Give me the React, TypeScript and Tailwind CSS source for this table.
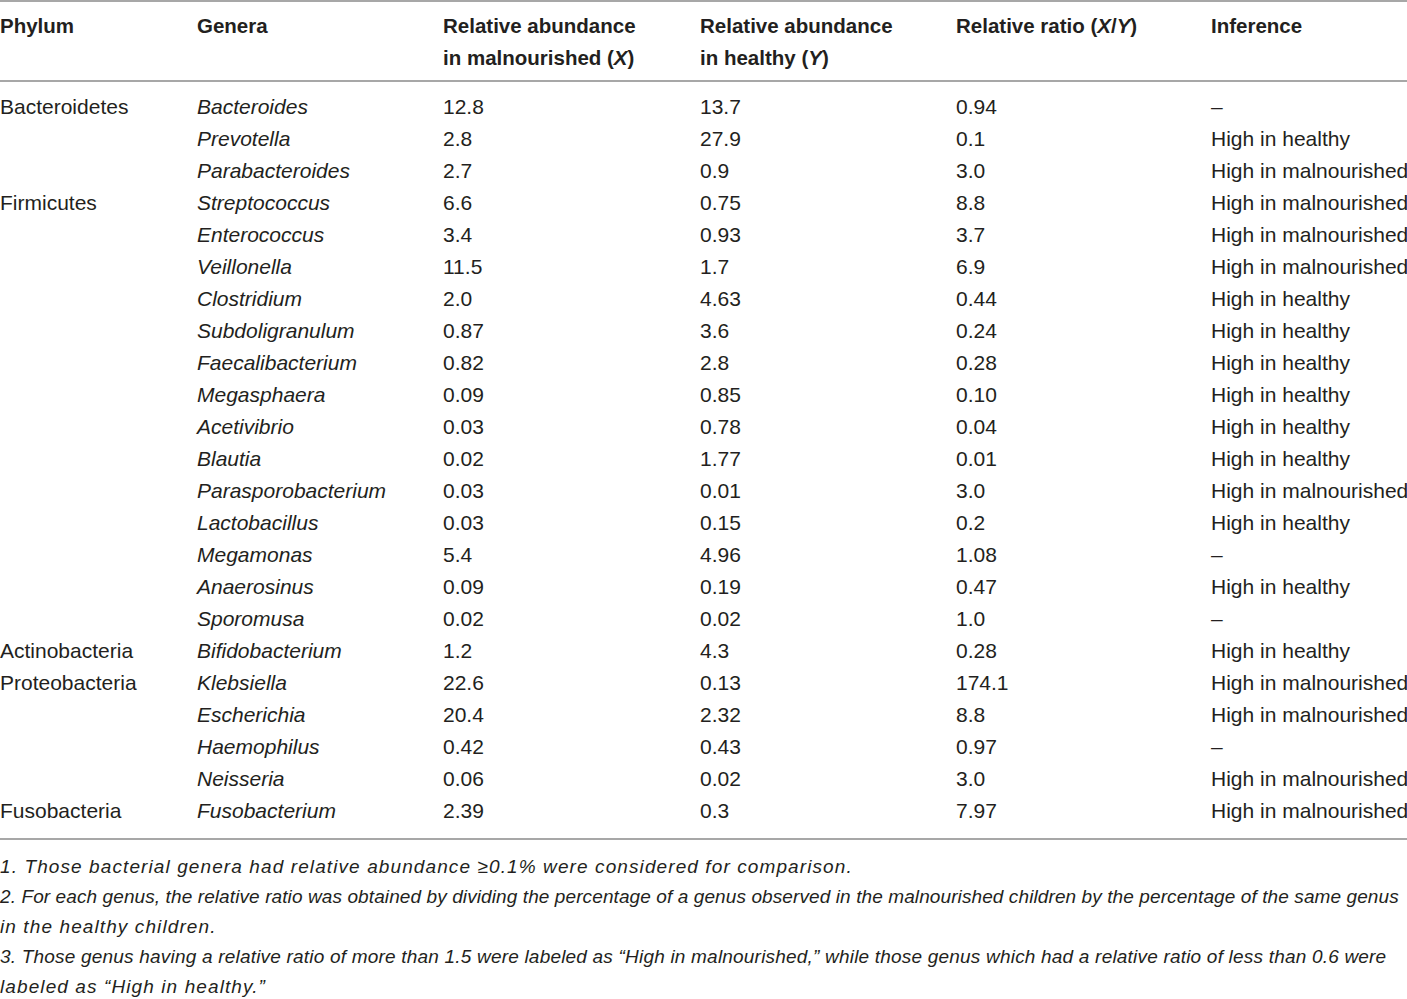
import React from 'react';

type Row = { phylum?: string; genus: string; x: string; y: string; ratio: string; inference: string };

const rows: Row[] = [
  { phylum: 'Bacteroidetes', genus: 'Bacteroides', x: '12.8', y: '13.7', ratio: '0.94', inference: '–' },
  { genus: 'Prevotella', x: '2.8', y: '27.9', ratio: '0.1', inference: 'High in healthy' },
  { genus: 'Parabacteroides', x: '2.7', y: '0.9', ratio: '3.0', inference: 'High in malnourished' },
  { phylum: 'Firmicutes', genus: 'Streptococcus', x: '6.6', y: '0.75', ratio: '8.8', inference: 'High in malnourished' },
  { genus: 'Enterococcus', x: '3.4', y: '0.93', ratio: '3.7', inference: 'High in malnourished' },
  { genus: 'Veillonella', x: '11.5', y: '1.7', ratio: '6.9', inference: 'High in malnourished' },
  { genus: 'Clostridium', x: '2.0', y: '4.63', ratio: '0.44', inference: 'High in healthy' },
  { genus: 'Subdoligranulum', x: '0.87', y: '3.6', ratio: '0.24', inference: 'High in healthy' },
  { genus: 'Faecalibacterium', x: '0.82', y: '2.8', ratio: '0.28', inference: 'High in healthy' },
  { genus: 'Megasphaera', x: '0.09', y: '0.85', ratio: '0.10', inference: 'High in healthy' },
  { genus: 'Acetivibrio', x: '0.03', y: '0.78', ratio: '0.04', inference: 'High in healthy' },
  { genus: 'Blautia', x: '0.02', y: '1.77', ratio: '0.01', inference: 'High in healthy' },
  { genus: 'Parasporobacterium', x: '0.03', y: '0.01', ratio: '3.0', inference: 'High in malnourished' },
  { genus: 'Lactobacillus', x: '0.03', y: '0.15', ratio: '0.2', inference: 'High in healthy' },
  { genus: 'Megamonas', x: '5.4', y: '4.96', ratio: '1.08', inference: '–' },
  { genus: 'Anaerosinus', x: '0.09', y: '0.19', ratio: '0.47', inference: 'High in healthy' },
  { genus: 'Sporomusa', x: '0.02', y: '0.02', ratio: '1.0', inference: '–' },
  { phylum: 'Actinobacteria', genus: 'Bifidobacterium', x: '1.2', y: '4.3', ratio: '0.28', inference: 'High in healthy' },
  { phylum: 'Proteobacteria', genus: 'Klebsiella', x: '22.6', y: '0.13', ratio: '174.1', inference: 'High in malnourished' },
  { genus: 'Escherichia', x: '20.4', y: '2.32', ratio: '8.8', inference: 'High in malnourished' },
  { genus: 'Haemophilus', x: '0.42', y: '0.43', ratio: '0.97', inference: '–' },
  { genus: 'Neisseria', x: '0.06', y: '0.02', ratio: '3.0', inference: 'High in malnourished' },
  { phylum: 'Fusobacteria', genus: 'Fusobacterium', x: '2.39', y: '0.3', ratio: '7.97', inference: 'High in malnourished' },
];

const cols = 'grid grid-cols-[197px_246px_257px_256px_255px_1fr]';

export default function App() {
  return (
    <div className="w-[1407px] h-[999px] bg-white text-[#231f20] font-['Liberation_Sans',Arial,sans-serif] overflow-hidden">
      {/* header */}
      <div className={`${cols} border-t-2 border-b-2 border-[#a7a7a7] pt-[8px] pb-[6px] text-[20.5px] leading-[32px] font-bold`}>
        <div>Phylum</div>
        <div>Genera</div>
        <div>
          Relative abundance
          <br />
          in malnourished (<i>X</i>)
        </div>
        <div>
          Relative abundance
          <br />
          in healthy (<i>Y</i>)
        </div>
        <div>
          Relative ratio (<i>X</i>/<i>Y</i>)
        </div>
        <div>Inference</div>
      </div>

      {/* body */}
      <div className="pt-[9px] pb-[11px] border-b-2 border-[#a7a7a7] text-[21px] leading-[32px]">
        {rows.map((r, i) => (
          <div key={i} className={cols}>
            <div>{r.phylum ?? ''}</div>
            <div className="italic">{r.genus}</div>
            <div>{r.x}</div>
            <div>{r.y}</div>
            <div>{r.ratio}</div>
            <div className="whitespace-nowrap">{r.inference}</div>
          </div>
        ))}
      </div>

      {/* footnotes */}
      <div className="pt-[12px] text-[19px] leading-[30px] italic whitespace-nowrap">
        <p className="tracking-[1.1px]">1. Those bacterial genera had relative abundance ≥0.1% were considered for comparison.</p>
        <p className="tracking-[0.1px]">
          2. For each genus, the relative ratio was obtained by dividing the percentage of a genus observed in the malnourished children by the percentage of the same genus
        </p>
        <p className="tracking-[1.1px]">in the healthy children.</p>
        <p className="tracking-[0.2px]">
          3. Those genus having a relative ratio of more than 1.5 were labeled as “High in malnourished,” while those genus which had a relative ratio of less than 0.6 were
        </p>
        <p className="tracking-[1.1px]">labeled as “High in healthy.”</p>
      </div>
    </div>
  );
}
